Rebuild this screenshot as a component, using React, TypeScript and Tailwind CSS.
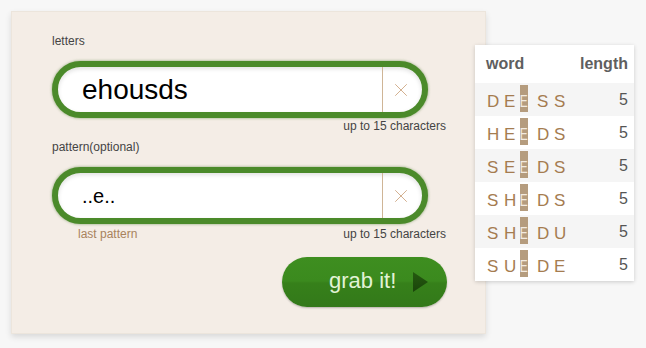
import { X } from 'lucide-react';

const words = [
  { word: 'DEESS', len: 5 },
  { word: 'HEEDS', len: 5 },
  { word: 'SEEDS', len: 5 },
  { word: 'SHEDS', len: 5 },
  { word: 'SHEDU', len: 5 },
  { word: 'SUEDE', len: 5 },
];

const font = { fontFamily: '"Liberation Sans", Arial, sans-serif' };

function PillInput({ value, big }: { value: string; big?: boolean }) {
  return (
    <div className="w-[376px] h-[57px] rounded-full border-[6px] border-[#4b8a2a] bg-white flex items-stretch shadow-[0_0_3px_rgba(60,110,30,0.6),inset_0_2px_4px_rgba(0,0,0,0.12)] overflow-hidden">
      <div
        className={`flex-1 flex items-center pl-[24px] text-black ${
          big ? 'text-[28px]' : 'text-[20px]'
        }`}
      >
        {value}
      </div>
      <div className="w-px bg-[#cfb596]" />
      <div className="w-[39px] flex items-center justify-center pr-[4px]">
        <X className="w-[22px] h-[22px] text-[#cfa985]" strokeWidth={1} />
      </div>
    </div>
  );
}

function Word({ word }: { word: string }) {
  // third letter is the matched pattern letter
  return (
    <div className="flex items-end h-full pb-[4px] text-[17px] leading-[20px] text-[#a57c50]">
      {word.split('').map((ch, i) =>
        i === 2 ? (
          <span
            key={i}
            className="w-[8px] h-[27px] bg-[#b59c7e] mr-[9px] ml-[-1px] flex items-end justify-center text-[#f3ebe0]"
          >
            <span className="leading-[20px] scale-x-[0.7]">{ch}</span>
          </span>
        ) : (
          <span key={i} className="w-[17px]">
            {ch}
          </span>
        )
      )}
    </div>
  );
}

export default function App() {
  return (
    <div className="w-[646px] h-[348px] bg-[#f7f7f7] overflow-hidden" style={font}>
      <div className="flex items-start pt-[11px] pl-[11px]">
        {/* Form panel */}
        <div className="w-[475px] h-[323px] bg-[#f4ede6] shadow-[0_3px_6px_rgba(0,0,0,0.12)] border border-[#ece5dc] pt-[22px] pl-[40px]">
          <div className="text-[12px] leading-[14px] text-[#444]">letters</div>
          <div className="mt-[13px]">
            <PillInput value="ehousds" big />
          </div>
          <div className="w-[394px] mt-[1px] text-right text-[12px] leading-[14px] text-[#444]">
            up to 15 characters
          </div>
          <div className="mt-[7px] text-[12px] leading-[14px] text-[#444]">pattern(optional)</div>
          <div className="mt-[13px]">
            <PillInput value="..e.." />
          </div>
          <div className="w-[394px] mt-[3px] flex justify-between text-[12px] leading-[14px]">
            <span className="pl-[26px] text-[#a8835d]">last pattern</span>
            <span className="text-[#444]">up to 15 characters</span>
          </div>
          <div className="w-[395px] mt-[16px] flex justify-end">
            <button className="w-[165px] h-[50px] rounded-full bg-[linear-gradient(#3e8e20_0%,#3b8a1e_48%,#36801a_52%,#33791a_100%)] shadow-[0_1px_2px_rgba(0,0,0,0.25)] flex items-center pl-[47px]">
              <span className="text-[22px] text-[#e2f3d6] leading-none pb-[2px]">grab it!</span>
              <svg className="ml-[17px]" width="15" height="20" viewBox="0 0 15 20">
                <defs>
                  <linearGradient id="tri" x1="0" y1="0" x2="0" y2="1">
                    <stop offset="0" stopColor="#255a10" />
                    <stop offset="1" stopColor="#1a440a" />
                  </linearGradient>
                </defs>
                <path d="M0 0 L15 10 L0 20 Z" fill="url(#tri)" />
              </svg>
            </button>
          </div>
        </div>

        {/* Results table */}
        <div className="ml-[-11px] mt-[34px] w-[159px] bg-white shadow-[0_1px_4px_rgba(0,0,0,0.18)]">
          <div className="h-[38px] flex items-center justify-between pl-[11px] pr-[6px] text-[16px] font-bold text-[#5f5f5f]">
            <span>word</span>
            <span>length</span>
          </div>
          {words.map((w, i) => (
            <div
              key={w.word}
              className={`h-[33px] flex justify-between pl-[12px] pr-[6px] ${
                i % 2 === 0 ? 'bg-[#f5f5f5]' : 'bg-white'
              }`}
            >
              <Word word={w.word} />
              <span className="flex items-center text-[16px] text-[#555]">{w.len}</span>
            </div>
          ))}
        </div>
      </div>
    </div>
  );
}
